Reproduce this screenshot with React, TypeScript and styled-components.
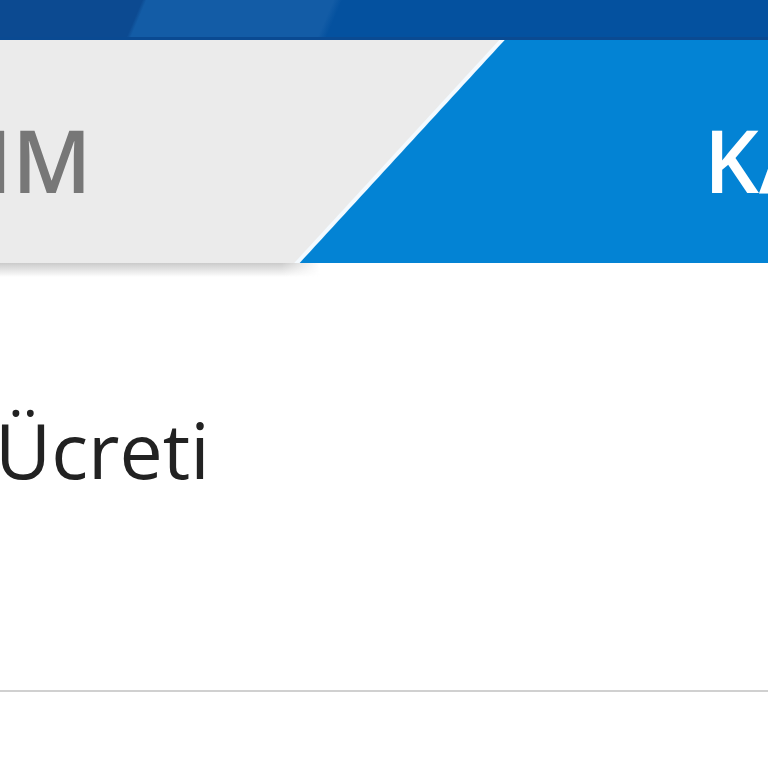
import styled, { createGlobalStyle } from "styled-components";

const GlobalStyle = createGlobalStyle`
  html, body {
    margin: 0;
    padding: 0;
    background: #ffffff;
    overflow: hidden;
  }
  body {
    font-family: "Open Sans", "Noto Sans", sans-serif;
  }
`;

export default function App() {
  return (
    <>
      <GlobalStyle />
      <Page>
        <Header />
        <TabBar>
          <TabCell>
            <TabLabel active={false} offset={-14}>
              IM
            </TabLabel>
          </TabCell>
          <TabLabel active={true} offset={0}>
            KA
          </TabLabel>
        </TabBar>
        <TabShadow />
        <ListRow>
          <RowTitle>Ücreti</RowTitle>
        </ListRow>
      </Page>
    </>
  );
}

const Page = styled.div`
  width: 768px;
  height: 768px;
  overflow: hidden;

  display: flex;
  flex-direction: column;

  background: #ffffff;
`;

const Header = styled.div`
  height: 40px;
  flex: 0 0 40px;
  box-sizing: border-box;
  border-bottom: 3px solid #0a4a92;

  background: linear-gradient(
    113deg,
    #0c4a91 0 131px,
    #135ca6 135px 307px,
    #04519f 315px
  );
`;

const TabBar = styled.div`
  height: 223px;
  flex: 0 0 223px;
  overflow: hidden;

  display: flex;
  flex-direction: row;
  align-items: flex-start;
  white-space: nowrap;

  background: linear-gradient(
    132.6deg,
    #ebebeb 0 367px,
    #f4faff 368px 371px,
    #0383d4 372px
  );
`;

const TabCell = styled.div`
  flex: 0 0 704px;
  display: flex;
  align-items: flex-start;
`;

const TabLabel = styled.div<{ active: boolean; offset: number }>`
  margin-left: ${(p) => p.offset}px;
  padding-top: 77px;

  font-size: 86px;
  line-height: 1;
  font-weight: 600;
  color: ${(p) => (p.active ? "#ffffff" : "#777777")};
`;

const TabShadow = styled.div`
  height: 14px;
  flex: 0 0 14px;
  width: 320px;

  background: linear-gradient(#cbcbcb, rgba(255, 255, 255, 0));
  mask-image: linear-gradient(to right, #000 88%, transparent);
`;

const ListRow = styled.div`
  height: 415px;
  flex: 0 0 415px;
  box-sizing: border-box;
  border-bottom: 2px solid #d0d0d0;

  display: flex;
  align-items: flex-start;
  padding-top: 134px;
`;

const RowTitle = styled.div`
  margin-left: -5px;

  font-size: 77px;
  line-height: 1;
  font-weight: 400;
  color: #222222;
`;
